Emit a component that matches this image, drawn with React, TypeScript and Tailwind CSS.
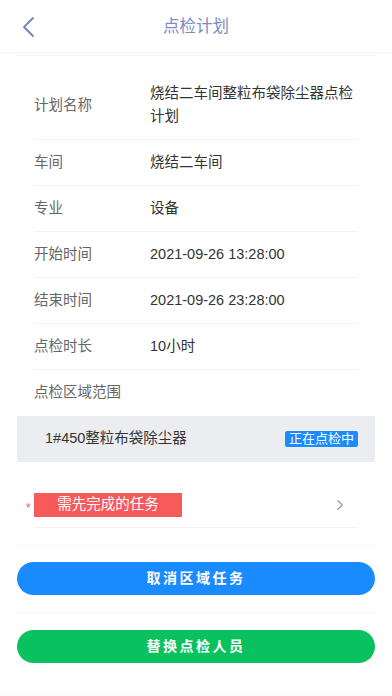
import { ChevronRight } from 'lucide-react';

const rows = [
  { label: '计划名称', value: '烧结二车间整粒布袋除尘器点检计划' },
  { label: '车间', value: '烧结二车间' },
  { label: '专业', value: '设备' },
  { label: '开始时间', value: '2021-09-26 13:28:00' },
  { label: '结束时间', value: '2021-09-26 23:28:00' },
  { label: '点检时长', value: '10小时' },
];

export default function App() {
  return (
    <div
      className="w-[392px] h-[696px] bg-white overflow-hidden"
      style={{ fontFamily: '"Liberation Sans", "Noto Sans CJK SC", sans-serif' }}
    >
      {/* Header */}
      <div className="relative h-[52px] flex items-center justify-center bg-white shadow-[0_1px_3px_rgba(0,0,0,0.05)]">
        <svg className="absolute left-[20px] top-[16px]" width="16" height="22" viewBox="0 0 16 22" fill="none">
          <path d="M13 2 L4 11 L13 20" stroke="#6f82c2" strokeWidth="1.8" strokeLinecap="round" strokeLinejoin="round" />
        </svg>
        <span className="text-[16.5px] text-[#7d8cc4]">点检计划</span>
      </div>

      <div className="px-[17px]">
        <div className="mt-[3px] border-t border-[#f6f6f6]" />

        {/* Info rows */}
        <div className="px-[17px] pt-[15px]">
          {rows.map((row) => (
            <div
              key={row.label}
              className="flex items-center py-[11px] border-b border-[#f2f2f2] text-[14.5px] leading-[23px]"
            >
              <div className="w-[116px] shrink-0 text-[#666666]">{row.label}</div>
              <div className="flex-1 text-[#333333]">{row.value}</div>
            </div>
          ))}
          <div className="flex items-center h-[46px] text-[14.5px] text-[#666666]">点检区域范围</div>
        </div>

        {/* Area item */}
        <div className="h-[46px] flex items-center justify-between bg-[#ebedf0] pl-[28px] pr-[17px]">
          <span className="text-[14.5px] text-[#333333]">1#450整粒布袋除尘器</span>
          <span className="h-[16px] px-[4px] flex items-center rounded-[2px] bg-[#1a8cff] text-white text-[13px] leading-[16px]">
            正在点检中
          </span>
        </div>

        {/* Prerequisite task */}
        <div className="mx-[17px] mt-[21px] h-[45px] border-b border-[#f2f2f2] flex items-center justify-between relative">
          <span className="absolute left-[-8px] top-[16px] text-[#f25a5a] text-[12px]">*</span>
          <span className="w-[148px] h-[24px] flex items-center justify-center bg-[#f65a5a] text-white text-[14.5px]">
            需先完成的任务
          </span>
          <ChevronRight className="w-[18px] h-[18px] text-[#999999] mr-[9px]" strokeWidth={1.5} />
        </div>

        <div className="mt-[17px] border-t border-[#f6f6f6]" />

        <button className="mt-[16px] w-full h-[33px] rounded-full bg-[#1a8bff] text-white text-[14px] font-bold tracking-[2.5px] flex items-center justify-center">
          取消区域任务
        </button>

        <div className="mt-[17px] border-t border-[#f6f6f6]" />

        <button className="mt-[17px] w-full h-[33px] rounded-full bg-[#0ac160] text-white text-[14px] font-bold tracking-[2.5px] flex items-center justify-center">
          替换点检人员
        </button>
      </div>

      <div className="mt-[31px] border-t border-[#f6f6f6]" />
    </div>
  );
}
